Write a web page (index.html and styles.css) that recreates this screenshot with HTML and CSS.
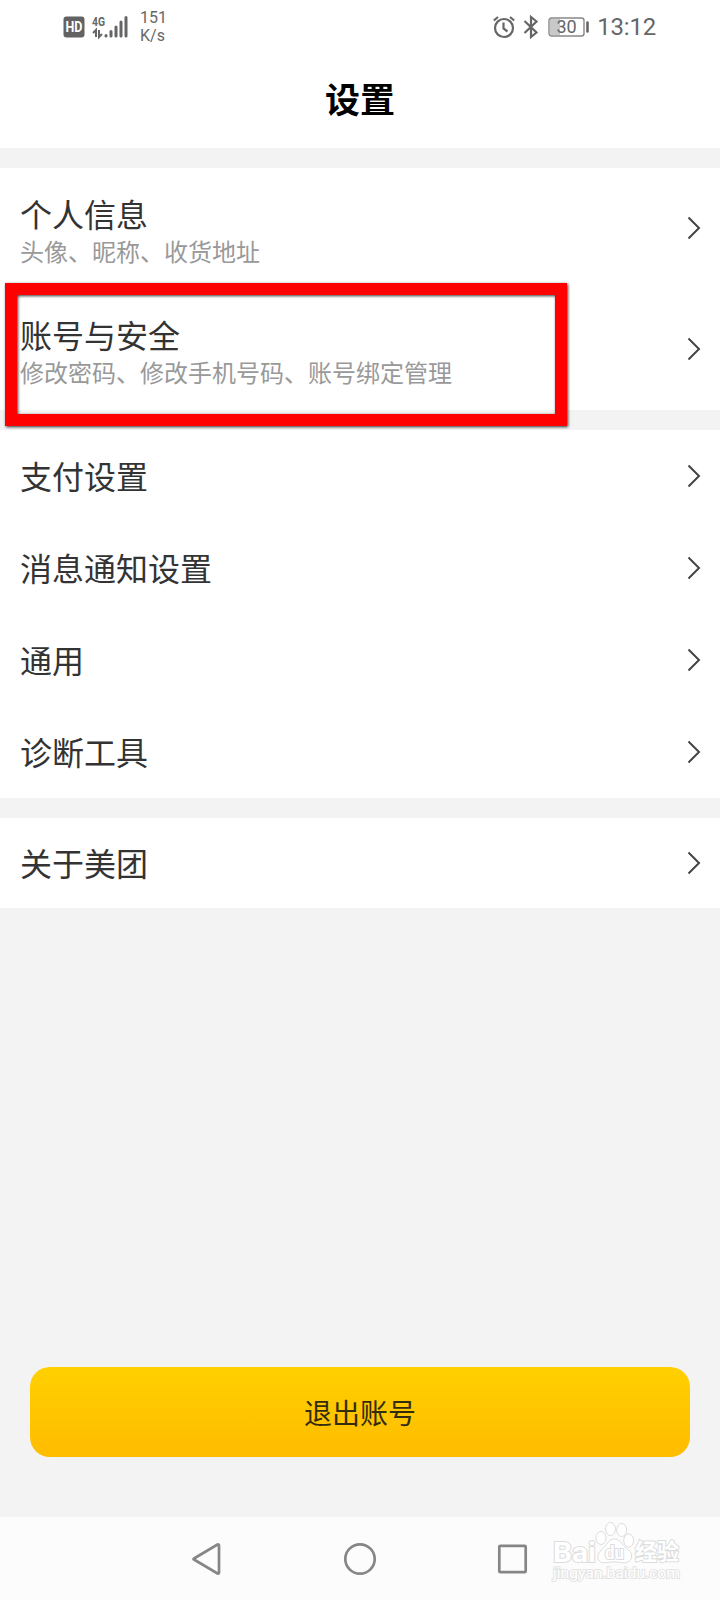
FILE: index.html
```html
<!DOCTYPE html>
<html lang="zh-CN">
  <head>
    <meta charset="UTF-8" />
    <meta name="viewport" content="width=device-width, initial-scale=1.0" />
    <title>设置</title>
    <link rel="stylesheet" href="styles.css">
  </head>
  <body>
    <svg width="0" height="0" class="defs">
      <symbol id="chevron" viewBox="0 0 14 24">
        <path d="M1.5 1.5 12 12 1.5 22.5" fill="none" stroke="#444" stroke-width="2" />
      </symbol>
    </svg>

    <div class="status">
      <div class="status-left">
        <svg class="hd" width="22" height="22" viewBox="0 0 22 22">
          <rect x="0.5" y="0.5" width="21" height="21" rx="3" fill="#626262" />
          <text x="11" y="15.5" text-anchor="middle" textLength="17" lengthAdjust="spacingAndGlyphs">HD</text>
        </svg>
        <svg class="signal" width="36" height="24" viewBox="0 0 36 24">
          <text x="0" y="10.5" textLength="13" lengthAdjust="spacingAndGlyphs">4G</text>
          <path d="M4 22V15L1 18M7 15v7l3-3" fill="none" stroke="#666" stroke-width="2" />
          <g stroke="#666" stroke-width="3" stroke-linecap="round">
            <path d="M14 20.5v.5M19 16.5V21M24 12v9M29 7v14M34 2.5V21" />
          </g>
        </svg>
        <div class="speed"><span>151</span><span>K/s</span></div>
      </div>
      <div class="status-right">
        <svg class="alarm" width="22" height="24" viewBox="0 0 22 24" fill="none" stroke="#666" stroke-width="2.2">
          <circle cx="11" cy="13" r="9" />
          <path d="M10.5 7.5v6l4 3M.8 5.5 5 2M21.2 5.5 17 2" />
        </svg>
        <svg class="bluetooth" width="16" height="24" viewBox="0 0 16 24" fill="none" stroke="#666" stroke-width="2.2">
          <path d="m1.5 6 12 11.5L8 22V2l5.5 4.5L1.5 18" />
        </svg>
        <svg class="battery" width="42" height="20" viewBox="0 0 42 20">
          <rect x="2" y="2" width="10" height="16" fill="#c8c8c8" />
          <rect x="1" y="1" width="35" height="18" rx="2.5" fill="none" stroke="#888" stroke-width="1.4" />
          <path d="M39.5 5.5v9" stroke="#666" stroke-width="2.6" stroke-linecap="round" />
          <text x="18.5" y="16" text-anchor="middle">30</text>
        </svg>
        <span class="clock">13:12</span>
      </div>
    </div>

    <h1 class="title">设置</h1>

    <div class="group">
      <div class="row tall">
        <div>
          <div class="name">个人信息</div>
          <div class="desc">头像、昵称、收货地址</div>
        </div>
        <svg class="arrow"><use href="#chevron" /></svg>
      </div>
      <div class="row tall marked">
        <div>
          <div class="name">账号与安全</div>
          <div class="desc">修改密码、修改手机号码、账号绑定管理</div>
        </div>
        <svg class="arrow"><use href="#chevron" /></svg>
      </div>
    </div>

    <div class="group">
      <div class="row">
        <div class="name">支付设置</div>
        <svg class="arrow"><use href="#chevron" /></svg>
      </div>
      <div class="row">
        <div class="name">消息通知设置</div>
        <svg class="arrow"><use href="#chevron" /></svg>
      </div>
      <div class="row">
        <div class="name">通用</div>
        <svg class="arrow"><use href="#chevron" /></svg>
      </div>
      <div class="row">
        <div class="name">诊断工具</div>
        <svg class="arrow"><use href="#chevron" /></svg>
      </div>
    </div>

    <div class="group">
      <div class="row last">
        <div class="name">关于美团</div>
        <svg class="arrow"><use href="#chevron" /></svg>
      </div>
    </div>

    <button class="logout">退出账号</button>

    <div class="nav">
      <svg width="32" height="36" viewBox="0 0 32 36">
        <path d="M3 17.500 26.500 3.500q1.500-.5 1.500 1v27q0 1.500-1.500 1L3 18.500q-1-.5 0-1z" />
      </svg>
      <svg width="36" height="36" viewBox="0 0 36 36">
        <circle cx="18" cy="18" r="14.7" />
      </svg>
      <svg width="32" height="36" viewBox="0 0 32 36">
        <rect x="2.3" y="4.8" width="26.4" height="26.4" rx="1" />
      </svg>
      <svg class="watermark" width="140" height="70" viewBox="0 0 140 70">
        <g class="paw">
          <ellipse cx="56" cy="23" rx="5" ry="6.5" />
          <ellipse cx="65.5" cy="14" rx="5" ry="6.5" />
          <ellipse cx="76.7" cy="15" rx="5" ry="6.5" />
          <ellipse cx="83.7" cy="25.5" rx="5" ry="6.5" />
          <path d="M69 24c5 0 7 4 11 8 5 4 8 7 6 12-2 4-7 4-10 3.5-5-.8-9-.8-14 0-3 .5-8 .5-9-4-1-5 3-8 6-11 4-4 5-8.500 10-8.500z" />
        </g>
        <text class="wm-brand" x="8" y="46.5" textLength="43" lengthAdjust="spacingAndGlyphs">Bai</text>
        <text class="wm-du" x="60" y="43.5" textLength="19" lengthAdjust="spacingAndGlyphs">du</text>
        <text class="wm-cjk" x="90" y="45" textLength="44" lengthAdjust="spacingAndGlyphs">经验</text>
        <text class="wm-url" x="8" y="63" textLength="127" lengthAdjust="spacingAndGlyphs">jingyan.baidu.com</text>
      </svg>
    </div>
  </body>
</html>
```

FILE: styles.css
```css
* {
  box-sizing: border-box;
}
body {
  margin: 0;
  width: 720px;
  height: 1600px;
  display: flex;
  flex-direction: column;
  background: #f3f3f3;
  color: #333;
  font-family: 'Roboto', 'Noto Sans CJK SC', sans-serif;
  overflow: hidden;
}
.defs {
  display: block;
  flex: none;
}
.status {
  height: 54px;
  display: flex;
  justify-content: space-between;
  padding: 0 64px 0 63px;
  background: #fff;
  color: #666;
}
.status-left,
.status-right {
  display: flex;
  align-items: center;
}
.hd text {
  font-size: 14px;
  font-weight: bold;
  fill: #fff;
}
.signal {
  margin-left: 7px;
  overflow: visible;
}
.signal text {
  font-size: 13px;
  font-weight: bold;
  fill: #666;
}
.speed {
  display: flex;
  flex-direction: column;
  margin-left: 12px;
  font-size: 16px;
  line-height: 18px;
}
.bluetooth {
  margin-left: 8px;
}
.battery {
  margin-left: 9px;
}
.battery text {
  font-size: 18px;
  fill: #666;
}
.clock {
  margin-left: 7px;
  font-size: 24px;
  letter-spacing: -0.2px;
}
.title {
  margin: 0;
  height: 94px;
  line-height: 95px;
  background: #fff;
  color: #000;
  font-size: 35px;
  font-weight: bold;
  text-align: center;
}
.group {
  margin-top: 20px;
  background: #fff;
}
.row {
  position: relative;
  display: flex;
  align-items: center;
  justify-content: space-between;
  height: 92px;
  padding: 0 19px 0 20px;
}
.row.tall {
  height: 121px;
}
.row.last {
  height: 90px;
}
.name {
  padding-top: 4px;
  font-size: 32px;
  line-height: 40px;
}
.tall .name {
  padding-top: 8px;
}
.desc {
  color: #999;
  font-size: 24px;
  line-height: 34px;
}
.arrow {
  width: 14px;
  height: 24px;
  margin-bottom: 1px;
}
/* red frame around the account row */
.marked::after {
  content: '';
  box-sizing: border-box;
  position: absolute;
  left: 5px;
  top: -6px;
  width: 562px;
  height: 143px;
  border: 12px solid #f00;
  filter: drop-shadow(1px 1px 1.5px rgba(0, 0, 0, 0.8));
  z-index: 1;
}
.logout {
  margin: auto 30px 60px;
  height: 90px;
  flex: none;
  border: 0;
  border-radius: 20px;
  background: linear-gradient(#ffd000, #ffbc00);
  color: #332d10;
  font-family: inherit;
  font-size: 28px;
}
.nav {
  position: relative;
  display: flex;
  align-items: center;
  justify-content: center;
  gap: 119px;
  height: 83px;
  background: #fcfcfc;
}
.nav svg {
  fill: none;
  stroke: #868686;
  stroke-width: 2.7;
}
.nav .watermark {
  position: absolute;
  left: 545px;
  top: -2px;
  fill: #fff;
  stroke: #dcdcdc;
  stroke-width: 1;
}
.watermark text {
  paint-order: stroke;
  stroke-width: 2;
}
.wm-brand {
  font-size: 28px;
  font-weight: bold;
}
.wm-du {
  font-size: 18px;
  font-weight: bold;
}
.wm-cjk {
  font-size: 23px;
  font-weight: bold;
}
.wm-url {
  font-size: 15px;
  stroke: #e4e4e4;
}
```
